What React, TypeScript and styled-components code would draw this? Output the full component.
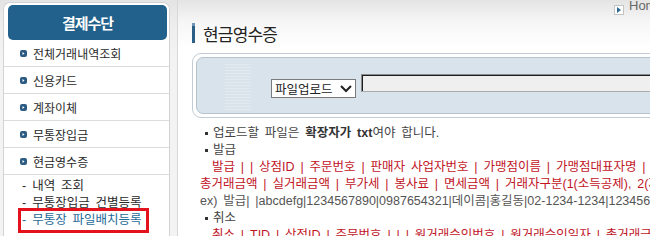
import React from 'react';
import styled, { createGlobalStyle } from 'styled-components';

const Global = createGlobalStyle`
  html, body { margin: 0; padding: 0; }
  body {
    width: 650px;
    height: 236px;
    overflow: hidden;
    background: linear-gradient(#e4e4e4 0px, #f6f6f6 22px, #ffffff 48px);
    font-family: "Liberation Sans", "Noto Sans CJK KR", sans-serif;
    color: #444;
  }
`;

const Page = styled.div`
  display: flex;
  width: 1000px;
  height: 236px;
`;

const Side = styled.aside`
  flex: none;
  width: 178px;
  box-sizing: border-box;
  border-right: 1px solid #d8d8d8;
  padding: 2px 0 0 3px;
  background: linear-gradient(#e4e4e4 0px, #efefef 30px, #f3f3f3 60px);
`;

const Panel = styled.nav`
  width: 167px;
  height: 100%;
  box-sizing: border-box;
  background: #fff;
  border: 1px solid #d3d3d3;
  border-bottom: none;
  border-radius: 7px 7px 0 0;
`;

const PanelHead = styled.div`
  margin: 2px 2px 0 4px;
  height: 35px;
  border-radius: 5px;
  background: #21618b;
  color: #fff;
  font-size: 15px;
  font-weight: 700;
  letter-spacing: -1px;
  display: flex;
  align-items: center;
  justify-content: center;
`;

const MenuItem = styled.div`
  height: 26px;
  border-bottom: 1px solid #dcdcdc;
  display: flex;
  align-items: center;
  padding-left: 16px;
  gap: 6px;
  font-size: 12px;
  color: #2a2a2a;
`;

const Dot = styled.span`
  width: 7px;
  height: 7px;
  border-radius: 2px;
  background: #2b5b82;
  display: inline-flex;
  align-items: center;
  justify-content: center;
  flex: none;
`;

const SubMenu = styled.div`
  padding: 3px 0 0 18px;
  display: flex;
  flex-direction: column;
  align-items: flex-start;
`;

const SubItem = styled.span<{ $active?: boolean }>`
  display: inline-block;
  height: 17px;
  line-height: 17px;
  font-size: 12.5px;
  word-spacing: 2.5px;
  white-space: nowrap;
  color: ${(p) => (p.$active ? '#1f6a98' : '#2a2a2a')};
  ${(p) =>
    p.$active
      ? `outline: 3px solid #e3121c; outline-offset: 1px; padding-right: 3px;`
      : ''}
`;

const Main = styled.main`
  flex: 1;
  padding-left: 14px;
`;

const Crumb = styled.div`
  height: 20px;
  padding-left: 422px;
  display: flex;
  align-items: flex-start;
  gap: 5px;
  font-size: 13px;
  line-height: 12px;
  color: #666;
  white-space: nowrap;
`;

const CrumbIcon = styled.span`
  margin-top: 5px;
  width: 8px;
  height: 8px;
  border: 1px solid #c4c4c4;
  background: #fff;
  display: inline-flex;
  align-items: center;
  justify-content: center;
`;

const TitleRow = styled.div`
  display: flex;
  align-items: center;
  gap: 8px;
  height: 26px;
`;

const TitleBar = styled.span`
  width: 3px;
  height: 20px;
  background: linear-gradient(#6f96b6 0 3px, #2d5e86 3px);
`;

const Title = styled.h1`
  margin: 0;
  font-size: 17px;
  font-weight: 400;
  letter-spacing: -0.8px;
  color: #222;
`;

const UploadOuter = styled.div`
  margin-top: 7px;
  width: 600px;
  border: 1px solid #c3ccd4;
  border-radius: 9px;
  padding: 3px;
  background: #fff;
`;

const UploadInner = styled.div`
  box-sizing: border-box;
  height: 57px;
  border: 1px solid #b7c4cf;
  border-radius: 7px;
  background:
    repeating-linear-gradient(to bottom, rgba(255, 255, 255, 0.28) 0 1px, rgba(255, 255, 255, 0) 1px 3px) no-repeat 28px 6px / 26px 46px,
    #d8e3eb;
  display: flex;
  align-items: flex-start;
  gap: 5px;
  padding: 16px 0 0 74px;
`;

const SelectBox = styled.div`
  margin-top: 5px;
  width: 77px;
  height: 17px;
  border: 1px solid #7b7b7b;
  background: #fff;
  display: flex;
  align-items: center;
  justify-content: space-between;
  padding: 0 3px 0 3px;
  font-size: 12.5px;
  color: #222;
`;

const FileInput = styled.div`
  width: 400px;
  height: 16px;
  border-top: 1px solid #8a8a8a;
  border-left: 1px solid #8a8a8a;
  border-bottom: 1px solid #ababab;
  border-right: 1px solid #ababab;
  box-shadow: inset 1px 1px 0 #1e1e1e;
  background: #efefef;
`;

const Notes = styled.div`
  margin-top: 7px;
  padding-left: 8px;
  font-size: 12.5px;
  word-spacing: 2.4px;
  line-height: 17px;
  white-space: nowrap;
`;

const Bullet = styled.div`
  display: flex;
  align-items: center;
  gap: 5px;
  padding-left: 5px;
  color: #444;
  &::before {
    content: '';
    width: 3px;
    height: 3px;
    background: #333;
    flex: none;
  }
`;

const RedLine = styled.div<{ $indent?: boolean }>`
  color: #c1141f;
  padding-left: ${(p) => (p.$indent ? '12px' : '0')};
`;

const Example = styled.div`
  color: #555;
`;

const Strong = styled.b`
  color: #333;
`;

const ArrowDot = () => (
  <svg width="5" height="5" viewBox="0 0 5 5">
    <path d="M1.5 1 L3.5 2.5 L1.5 4 Z" fill="#fff" />
  </svg>
);

export default function App() {
  const menu = ['전체거래내역조회', '신용카드', '계좌이체', '무통장입금', '현금영수증'];
  return (
    <>
      <Global />
      <Page>
        <Side>
          <Panel>
            <PanelHead>결제수단</PanelHead>
            {menu.map((m) => (
              <MenuItem key={m}>
                <Dot>
                  <ArrowDot />
                </Dot>
                {m}
              </MenuItem>
            ))}
            <SubMenu>
              <SubItem>- 내역 조회</SubItem>
              <SubItem>- 무통장입금 건별등록</SubItem>
              <SubItem $active>- 무통장 파일배치등록</SubItem>
            </SubMenu>
          </Panel>
        </Side>
        <Main>
          <Crumb>
            <CrumbIcon>
              <svg width="4" height="6" viewBox="0 0 4 6">
                <path d="M0 0 L4 3 L0 6 Z" fill="#2a6a93" />
              </svg>
            </CrumbIcon>
            <span>Home &gt; 결제수단 &gt; 현금영수증</span>
          </Crumb>
          <TitleRow>
            <TitleBar />
            <Title>현금영수증</Title>
          </TitleRow>
          <UploadOuter>
            <UploadInner>
              <SelectBox>
                <span>파일업로드</span>
                <svg width="12" height="9" viewBox="0 0 12 9">
                  <path d="M1 2 L6 7 L11 2" fill="none" stroke="#222" strokeWidth="2" />
                </svg>
              </SelectBox>
              <FileInput />
            </UploadInner>
          </UploadOuter>
          <Notes>
            <Bullet>
              <span>
                업로드할 파일은 <Strong>확장자가 txt</Strong>여야 합니다.
              </span>
            </Bullet>
            <Bullet>발급</Bullet>
            <RedLine $indent>
              발급 | | 상점ID | 주문번호 | 판매자 사업자번호 | 가맹점이름 | 가맹점대표자명 | 가맹점주소 | 가맹점전화번호 |
            </RedLine>
            <RedLine>
              총거래금액 | 실거래금액 | 부가세 | 봉사료 | 면세금액 | 거래자구분(1(소득공제), 2(지출증빙)) | 신분확인번호 |
            </RedLine>
            <Example>
              ex) 발급| |abcdefg|1234567890|0987654321|데이콤|홍길동|02-1234-1234|1234567890|
            </Example>
            <Bullet>취소</Bullet>
            <RedLine $indent>
              취소 | TID | 상점ID | 주문번호 | | | 원거래승인번호 | 원거래승인일자 | 총거래금액 |
            </RedLine>
          </Notes>
        </Main>
      </Page>
    </>
  );
}
